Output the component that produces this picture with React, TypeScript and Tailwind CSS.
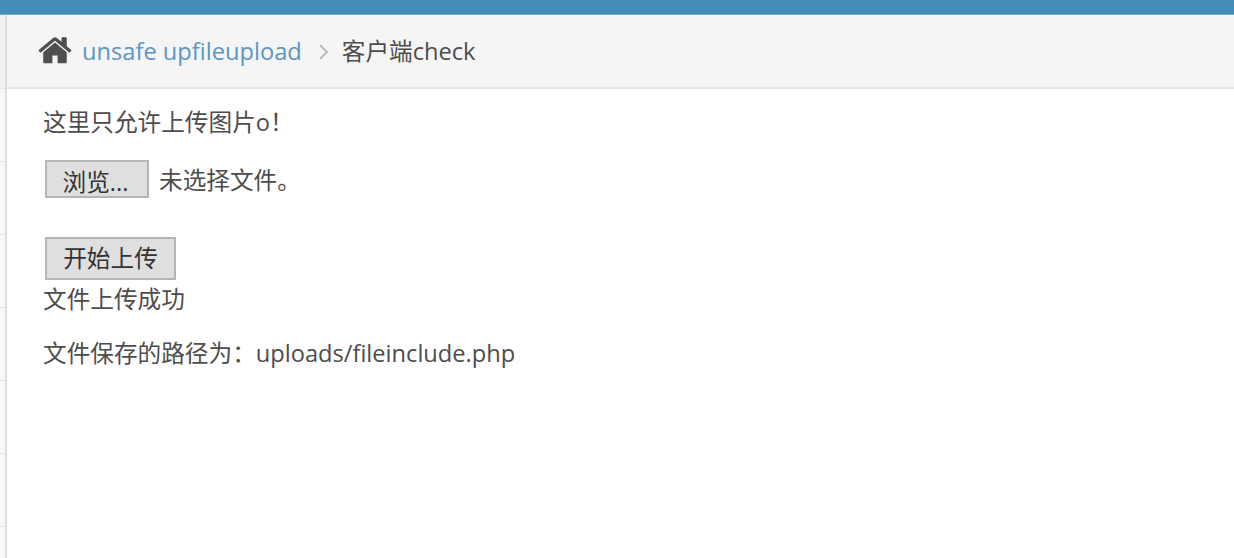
const rows = [0, 1, 2, 3, 4, 5, 6];

export default function App() {
  return (
    <div className="flex h-[558px] w-[1234px] flex-col overflow-hidden bg-white font-['Open_Sans','Noto_Sans_CJK_SC',sans-serif] text-[23.65px] text-[#4d4d4d]">
      <div className="h-[15px] shrink-0 border-b border-[#6fa6c9] bg-[#438eb9]" />
      <div className="flex min-h-0 flex-1">
        <div className="flex w-[7px] shrink-0 flex-col border-r-2 border-[#dddddd] bg-[#f2f2f2] pt-[73px]">
          {rows.map((r) => (
            <div key={r} className="h-[73px] shrink-0 border-t border-[#e5e5e5] bg-[#f8f8f8]" />
          ))}
        </div>
        <div className="flex min-w-0 flex-1 flex-col">
          <div className="flex h-[74px] shrink-0 items-center border-b-2 border-[#e5e5e5] bg-[#f5f5f5] pl-[30.5px] pt-[2px]">
            <svg viewBox="0 0 1792 1792" className="mb-[3px] h-[36.6px] w-[36.6px]" fill="#4f4f4f">
              <path d="M1408 992v480q0 26-19 45t-45 19h-384v-384h-256v384h-384q-26 0-45-19t-19-45v-480q0-1 .5-3t.5-3l575-474 575 474q1 2 1 6zm223-69l-62 74q-8 9-21 11h-3q-13 0-21-7l-692-577-692 577q-12 8-24 7-13-2-21-11l-62-74q-8-10-7-23.5t11-21.5l719-599q32-26 76-26t76 26l244 204v-195q0-14 9-23t23-9h192q14 0 23 9t9 23v408l219 182q10 8 11 21.5t-7 23.5z" />
            </svg>
            <span className="ml-[8px] text-[#5c96c4]">unsafe upfileupload</span>
            <svg viewBox="0 0 12 18" className="ml-[16px] h-[18px] w-[12px]" fill="none" stroke="#b9b9c4" strokeWidth="2">
              <path d="M2 2l7 7-7 7" />
            </svg>
            <span className="ml-[12px]">客户端check</span>
          </div>
          <div className="flex flex-col items-start pl-[36px]">
            <p className="mt-[17px] leading-[32px]">这里只允许上传图片o！</p>
            <div className="mt-[22px] flex items-center">
              <button className="ml-[2px] h-[38px] w-[104px] border-2 border-[#b5b5b5] bg-[#dfdfdf] pr-[3px] pt-[3px] text-[#333333]">浏览...</button>
              <span className="ml-[10px] pt-[3px]">未选择文件。</span>
            </div>
            <button className="ml-[2px] mt-[39px] h-[43px] w-[131px] border-2 border-[#b5b5b5] bg-[#dfdfdf] text-[#333333]">开始上传</button>
            <p className="-mt-[1px] leading-[40px]">文件上传成功</p>
            <p className="mt-[14px] leading-[40px]">文件保存的路径为：uploads/fileinclude.php</p>
          </div>
        </div>
      </div>
    </div>
  );
}
